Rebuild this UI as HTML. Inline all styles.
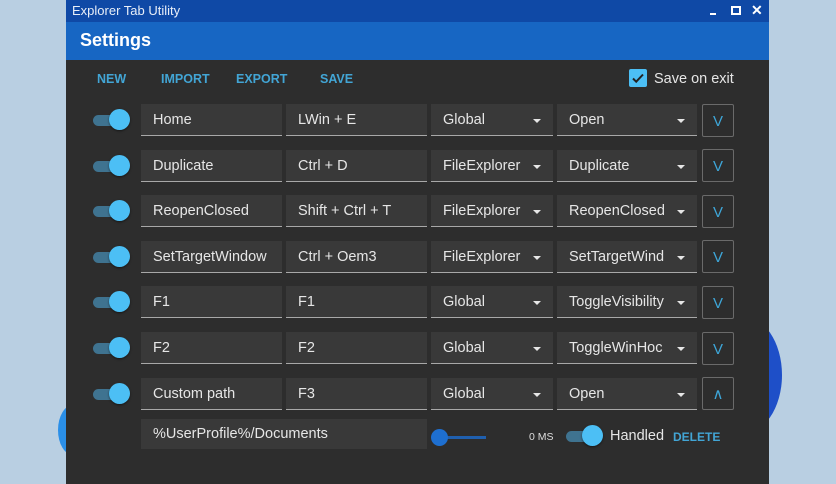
<!DOCTYPE html>
<html><head><style>
*{margin:0;padding:0;box-sizing:border-box}
body{width:836px;height:484px;overflow:hidden;background:#b9cfe2;font-family:"Liberation Sans",sans-serif;position:relative}
.a{position:absolute}
.win{left:66px;top:0;width:703px;height:484px;background:#2d2d2d}
.title{left:0;top:0;width:703px;height:22px;background:#0f49a6;color:#e8eef8;font-size:13px;line-height:21px;padding-left:6px}
.hdr{left:0;top:22px;width:703px;height:38px;background:#1766c3;color:#fff;font-size:18px;font-weight:bold;line-height:37px;padding-left:14px}
.btn{color:#42a5d5;font-size:12.5px;font-weight:bold;top:72px}
.f{background:#393939;border-bottom:1.5px solid #a8a8a8;color:#e6e6e6;font-size:14.5px;line-height:33px;padding-left:12px;height:32px;white-space:nowrap;overflow:hidden}
.dd:after{content:"";position:absolute;right:12px;top:15px;border-left:4px solid transparent;border-right:4px solid transparent;border-top:4px solid #e6e6e6}
.tg{width:38px;height:24px}
.tg .t{position:absolute;left:0;top:7px;width:30px;height:11px;border-radius:6px;background:#3f7390}
.tg .k{position:absolute;left:16px;top:1px;width:21px;height:21px;border-radius:50%;background:#4cbff5;box-shadow:0 1px 2px rgba(0,0,0,.5)}
.ex{width:32px;height:33px;border:1px solid #6a6a6a;border-radius:2px;color:#3ea6d8;font-size:15px;text-align:center;line-height:33px}
</style></head><body>
<div class="a" style="left:58px;top:405px;width:30px;height:50px;border-radius:50%;background:#2a8fe8"></div>
<div class="a" style="left:700px;top:315px;width:82px;height:120px;border-radius:50%;background:#1e4fc8"></div>
<div class="a win">
<div class="a title">Explorer Tab Utility</div>
<div class="a" style="left:644px;top:13px;width:6px;height:2px;background:#fff"></div>
<div class="a" style="left:665px;top:6px;width:10px;height:9px;border:2px solid #fff"></div>
<div class="a" style="left:685px;top:2px;color:#fff;font-size:14px;font-weight:bold">&#10005;</div>
<div class="a hdr">Settings</div>
<div class="a btn" style="left:31px">NEW</div>
<div class="a btn" style="left:95px">IMPORT</div>
<div class="a btn" style="left:170px">EXPORT</div>
<div class="a btn" style="left:254px">SAVE</div>
<div class="a" style="left:563px;top:69px;width:18px;height:18px;background:#4cbff5;border-radius:2px"><svg width="18" height="18"><path d="M4 9.5l3.2 3.2L14 5.5" stroke="#222" stroke-width="2" fill="none"/></svg></div>
<div class="a" style="left:588px;top:71px;color:#e6e6e6;font-size:14.5px">Save on exit</div>
</div>
<div id="rows"></div>
<script>
var r=[["Home","LWin + E","Global","Open"],["Duplicate","Ctrl + D","FileExplorer","Duplicate"],["ReopenClosed","Shift + Ctrl + T","FileExplorer","ReopenClosed"],["SetTargetWindow","Ctrl + Oem3","FileExplorer","SetTargetWind"],["F1","F1","Global","ToggleVisibility"],["F2","F2","Global","ToggleWinHoc"],["Custom path","F3","Global","Open"]];
var h="";
r.forEach(function(x,i){var y=104+i*45.6;
h+='<div class="a tg" style="left:93px;top:'+(y+4)+'px"><div class="t"></div><div class="k"></div></div>';
h+='<div class="a f" style="left:141px;top:'+y+'px;width:141px">'+x[0]+'</div>';
h+='<div class="a f" style="left:286px;top:'+y+'px;width:141px">'+x[1]+'</div>';
h+='<div class="a f dd" style="left:431px;top:'+y+'px;width:122px">'+x[2]+'</div>';
h+='<div class="a f dd" style="left:557px;top:'+y+'px;width:140px;padding-right:28px">'+x[3]+'</div>';
h+='<div class="a ex" style="left:702px;top:'+(y-0.5)+'px">'+(i==6?'&#8743;':'V')+'</div>';});
h+='<div class="a f" style="left:141px;top:419px;width:286px;border-bottom:none;height:30px;line-height:31px">%UserProfile%/Documents</div>';
h+='<div class="a" style="left:440px;top:436px;width:46px;height:3px;background:#1f5fae"></div>';
h+='<div class="a" style="left:431px;top:429px;width:17px;height:17px;border-radius:50%;background:#1e6fd0"></div>';
h+='<div class="a" style="left:529px;top:431px;color:#ddd;font-size:10.5px">0 MS</div>';
h+='<div class="a tg" style="left:566px;top:424px"><div class="t"></div><div class="k"></div></div>';
h+='<div class="a" style="left:610px;top:428px;color:#e6e6e6;font-size:14.5px">Handled</div>';
h+='<div class="a" style="left:673px;top:430px;color:#42a5d5;font-size:12px;font-weight:bold">DELETE</div>';
document.getElementById("rows").innerHTML=h;
</script>
</body></html>
